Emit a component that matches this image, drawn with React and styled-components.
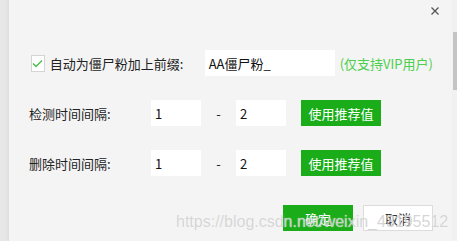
import React from 'react'
import styled, { createGlobalStyle } from 'styled-components'

const GlobalStyle = createGlobalStyle`
  html, body {
    margin: 0;
    padding: 0;
    background: #e6e6e6;
    overflow: hidden;
  }
  body {
    font-family: "Noto Sans CJK SC", "Noto Sans", sans-serif;
  }
`

const Page = styled.div`
  display: flex;
  width: 457px;
  height: 241px;
  background: linear-gradient(to right, #e8e8e8 0, #e6e6e6 6px, #dfdfdf 9px);
`

const Dialog = styled.div`
  position: relative;
  display: flex;
  flex-direction: column;
  width: 443px;
  height: 241px;
  margin-left: 9px;
  background: #f4f4f4;
  box-sizing: border-box;
  padding: 0 19px 0 20px;
`

const Header = styled.div`
  display: flex;
  justify-content: flex-end;
  height: 24px;
  padding-top: 7px;
  box-sizing: border-box;
  margin-right: -6px;
`

const Close = styled.button`
  width: 8px;
  height: 8px;
  padding: 0;
  border: 0;
  background: none;
  display: flex;
  svg {
    display: block;
  }
`

const Body = styled.div`
  display: flex;
  flex-direction: column;
  gap: 24px;
  padding-top: 26px;
`

const Row = styled.div`
  display: flex;
  align-items: center;
  height: 26px;
  font-size: 13px;
  color: #222;
`

const Check = styled.span`
  width: 15px;
  height: 15px;
  margin-left: 2px;
  margin-right: 5px;
  border: 1px solid #d4d4d4;
  background: #fff;
  display: flex;
  align-items: center;
  justify-content: center;
`

const Label = styled.span`
  width: ${({ $w }) => $w}px;
  flex: none;
  white-space: nowrap;
`

const Field = styled.div`
  width: ${({ $w }) => $w}px;
  height: 26px;
  background: #fff;
  box-sizing: border-box;
  padding-left: 4px;
  display: flex;
  align-items: center;
  font-size: 13px;
  color: #111;
  flex: none;
`

const Hint = styled.span`
  margin-left: 5px;
  color: #4ccf4c;
  white-space: nowrap;
`

const Dash = styled.span`
  width: 35px;
  text-align: center;
  flex: none;
`

const GreenButton = styled.button`
  width: ${({ $w }) => $w}px;
  height: 26px;
  margin-left: ${({ $ml }) => $ml || 0}px;
  border: 0;
  background: #1aad19;
  color: #fff;
  font-family: inherit;
  font-size: 13px;
  padding: 0;
`

const WhiteButton = styled.button`
  width: 70px;
  height: 26px;
  border: 1px solid #dcdcdc;
  background: #fff;
  color: #333;
  font-family: inherit;
  font-size: 13px;
  padding: 0;
`

const Footer = styled.div`
  display: flex;
  justify-content: flex-end;
  gap: 10px;
  margin-top: 29px;
`

const Watermark = styled.div`
  position: absolute;
  left: 167px;
  top: 214px;
  font-family: "Liberation Sans", Arial, sans-serif;
  font-size: 16px;
  line-height: 16px;
  color: rgba(200, 200, 200, 0.75);
  text-shadow: 0 0 1px rgba(255, 255, 255, 0.9);
  white-space: nowrap;
  pointer-events: none;
`

const Scroll = styled.div`
  width: 5px;
  height: 241px;
  background: #f1f1f1;
  padding-top: 32px;
  box-sizing: border-box;
`

const Thumb = styled.div`
  width: 4px;
  margin-left: 1px;
  height: 58px;
  background: #c4c4c4;
`

export default function App() {
  return (
    <>
      <GlobalStyle />
      <Page>
        <Dialog>
          <Header>
            <Close>
              <svg width="8" height="8" viewBox="0 0 8 8">
                <path d="M0.5 0.5L7.5 7.5M7.5 0.5L0.5 7.5" stroke="#555" strokeWidth="1.3" />
              </svg>
            </Close>
          </Header>
          <Body>
            <Row>
              <Check>
                <svg width="11" height="9" viewBox="0 0 11 9">
                  <path d="M1 4.5L4 7.5L10 1.5" fill="none" stroke="#4cbf4c" strokeWidth="1.4" />
                </svg>
              </Check>
              <Label $w={155}>自动为僵尸粉加上前缀:</Label>
              <Field $w={130}>AA僵尸粉_</Field>
              <Hint>(仅支持VIP用户)</Hint>
            </Row>
            <Row>
              <Label $w={122}>检测时间间隔:</Label>
              <Field $w={50}>1</Field>
              <Dash>-</Dash>
              <Field $w={50}>2</Field>
              <GreenButton $w={80} $ml={15}>使用推荐值</GreenButton>
            </Row>
            <Row>
              <Label $w={122}>删除时间间隔:</Label>
              <Field $w={50}>1</Field>
              <Dash>-</Dash>
              <Field $w={50}>2</Field>
              <GreenButton $w={80} $ml={15}>使用推荐值</GreenButton>
            </Row>
          </Body>
          <Footer>
            <GreenButton $w={70}>确定</GreenButton>
            <WhiteButton>取消</WhiteButton>
          </Footer>
          <Watermark>https://blog.csdn.net/weixin_43195512</Watermark>
        </Dialog>
        <Scroll>
          <Thumb />
        </Scroll>
      </Page>
    </>
  )
}
